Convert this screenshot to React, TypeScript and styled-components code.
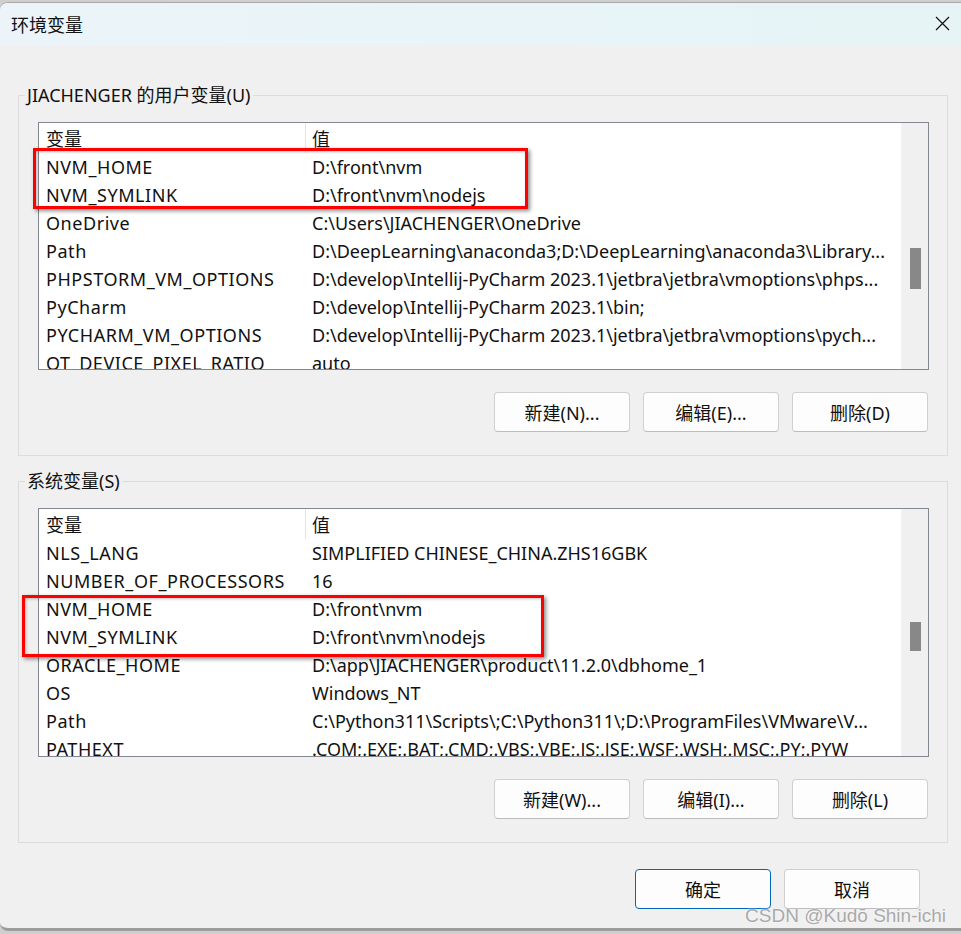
import styled, { createGlobalStyle } from "styled-components";

type EnvVar = { name: string; value: string };

const userVars: EnvVar[] = [
  { name: "NVM_HOME", value: String.raw`D:\front\nvm` },
  { name: "NVM_SYMLINK", value: String.raw`D:\front\nvm\nodejs` },
  { name: "OneDrive", value: String.raw`C:\Users\JIACHENGER\OneDrive` },
  { name: "Path", value: String.raw`D:\DeepLearning\anaconda3;D:\DeepLearning\anaconda3\Library...` },
  { name: "PHPSTORM_VM_OPTIONS", value: String.raw`D:\develop\Intellij-PyCharm 2023.1\jetbra\jetbra\vmoptions\phps...` },
  { name: "PyCharm", value: String.raw`D:\develop\Intellij-PyCharm 2023.1\bin;` },
  { name: "PYCHARM_VM_OPTIONS", value: String.raw`D:\develop\Intellij-PyCharm 2023.1\jetbra\jetbra\vmoptions\pych...` },
  { name: "QT_DEVICE_PIXEL_RATIO", value: "auto" },
];

const systemVars: EnvVar[] = [
  { name: "NLS_LANG", value: "SIMPLIFIED CHINESE_CHINA.ZHS16GBK" },
  { name: "NUMBER_OF_PROCESSORS", value: "16" },
  { name: "NVM_HOME", value: String.raw`D:\front\nvm` },
  { name: "NVM_SYMLINK", value: String.raw`D:\front\nvm\nodejs` },
  { name: "ORACLE_HOME", value: String.raw`D:\app\JIACHENGER\product\11.2.0\dbhome_1` },
  { name: "OS", value: "Windows_NT" },
  { name: "Path", value: String.raw`C:\Python311\Scripts\;C:\Python311\;D:\ProgramFiles\VMware\V...` },
  { name: "PATHEXT", value: ".COM;.EXE;.BAT;.CMD;.VBS;.VBE;.JS;.JSE;.WSF;.WSH;.MSC;.PY;.PYW" },
];

const GlobalStyle = createGlobalStyle`
  html, body {
    margin: 0;
    padding: 0;
    background: #cfcfcf;
    font-family: "Noto Sans", "Noto Sans CJK SC", sans-serif;
    color: #111;
  }
`;

const Dialog = styled.div`
  position: relative;
  margin-top: 2px;
  height: 929px;
  box-sizing: border-box;
  background: #f0f0f0;
  border-top: 1px solid #a8a8a8;
  border-bottom: 3px solid #9c9c9c;
  border-top-left-radius: 8px;
  border-bottom-left-radius: 8px;
  overflow: hidden;
`;

const TitleBar = styled.div`
  height: 43px;
  display: flex;
  align-items: center;
  justify-content: space-between;
  padding: 0 11px 2px 11px;
  box-sizing: border-box;
  background: linear-gradient(90deg, #ecf4f9 0%, #e8f4f8 60%, #e6f4f6 100%);
  font-size: 18px;
`;

const Body = styled.div`
  padding: 37px 13px 0 18px;
`;

const Group = styled.fieldset`
  margin: 0;
  padding: 0;
  border: 1px solid #dcdcdc;
  min-width: 0;
  & + & {
    margin-top: 13px;
  }
`;

const Legend = styled.legend`
  margin-left: 6px;
  padding: 0 2px;
  font-size: 18px;
  line-height: 24px;
`;

const GroupInner = styled.div`
  padding: 15px 18px 23px 19px;
`;

const ListWrap = styled.div<{ $h: number }>`
  position: relative;
  height: ${(p) => p.$h}px;
`;

const ListBox = styled.div`
  height: 100%;
  box-sizing: border-box;
  border: 1px solid #828790;
  background: #fff;
  display: grid;
  grid-template-columns: 1fr 26px;
  overflow: hidden;
`;

const Table = styled.div`
  overflow: hidden;
  border-right: 1px solid #f3f3f3;
`;

const Row = styled.div<{ $head?: boolean }>`
  display: grid;
  grid-template-columns: 267px 1fr;
  height: ${(p) => (p.$head ? 30 : 28)}px;
  align-items: center;
  font-size: 18px;
  white-space: nowrap;
`;

const NameCell = styled.div<{ $head?: boolean }>`
  height: 100%;
  display: flex;
  align-items: center;
  padding-left: 7px;
  box-sizing: border-box;
  letter-spacing: ${(p) => (p.$head ? 0 : 0.55)}px;
  border-right: 1px solid ${(p) => (p.$head ? "#e5e5e5" : "transparent")};
  overflow: hidden;
`;

const ValueCell = styled.div`
  padding-left: 6px;
  overflow: hidden;
`;

const ScrollTrack = styled.div`
  background: #f0f0f0;
  display: flex;
  flex-direction: column;
  align-items: center;
`;

const Thumb = styled.div<{ $top: number; $h: number }>`
  margin-top: ${(p) => p.$top}px;
  width: 11px;
  height: ${(p) => p.$h}px;
  background: #888;
`;

const Highlight = styled.div<{ $l: number; $t: number; $w: number; $h: number }>`
  position: absolute;
  left: ${(p) => p.$l}px;
  top: ${(p) => p.$t}px;
  width: ${(p) => p.$w}px;
  height: ${(p) => p.$h}px;
  box-sizing: border-box;
  border: 3px solid #ff0000;
  box-shadow: 2px 2px 4px rgba(0, 0, 0, 0.45), inset 1px 1px 3px rgba(0, 0, 0, 0.25);
  pointer-events: none;
`;

const ButtonRow = styled.div<{ $pr?: number }>`
  display: flex;
  justify-content: flex-end;
  gap: 13px;
  margin-top: 22px;
  padding-right: ${(p) => p.$pr ?? 1}px;
`;

const Button = styled.button<{ $primary?: boolean }>`
  width: 136px;
  height: 40px;
  box-sizing: border-box;
  border-radius: 4px;
  border: 1px solid ${(p) => (p.$primary ? "#0067c0" : "#d0d0d0")};
  border-bottom-color: ${(p) => (p.$primary ? "#0067c0" : "#bcbcbc")};
  background: #fdfdfd;
  font-family: inherit;
  font-size: 18px;
  color: #111;
  padding: 0;
`;

const Footer = styled(ButtonRow)`
  margin-top: 26px;
`;

const Watermark = styled.div`
  position: absolute;
  right: 15px;
  bottom: 1px;
  font-family: "Liberation Sans", Arial, sans-serif;
  font-size: 19px;
  color: #a9a9a9;
  text-shadow: 0 0 2px #fff;
`;

type ListProps = {
  rows: EnvVar[];
  height: number;
  thumbTop: number;
  thumbH: number;
  box: { l: number; t: number; w: number; h: number };
};

const VarList = ({ rows, height, thumbTop, thumbH, box }: ListProps) => (
  <ListWrap $h={height}>
    <ListBox>
      <Table>
        <Row $head>
          <NameCell $head>变量</NameCell>
          <ValueCell>值</ValueCell>
        </Row>
        {rows.map((r) => (
          <Row key={r.name}>
            <NameCell>{r.name}</NameCell>
            <ValueCell>{r.value}</ValueCell>
          </Row>
        ))}
      </Table>
      <ScrollTrack>
        <Thumb $top={thumbTop} $h={thumbH} />
      </ScrollTrack>
    </ListBox>
    <Highlight $l={box.l} $t={box.t} $w={box.w} $h={box.h} />
  </ListWrap>
);

const CloseIcon = () => (
  <svg width="15" height="15" viewBox="0 0 15 15">
    <path d="M1 1 L14 14 M14 1 L1 14" stroke="#111" strokeWidth="1.2" fill="none" />
  </svg>
);

const App = () => {
  return (
    <>
      <GlobalStyle />
      <Dialog>
        <TitleBar>
          <span>环境变量</span>
          <CloseIcon />
        </TitleBar>
        <Body>
          <Group>
            <Legend>JIACHENGER 的用户变量(U)</Legend>
            <GroupInner>
              <VarList
                rows={userVars}
                height={248}
                thumbTop={125}
                thumbH={41}
                box={{ l: -5, t: 26, w: 495, h: 61 }}
              />
              <ButtonRow>
                <Button>新建(N)...</Button>
                <Button>编辑(E)...</Button>
                <Button>删除(D)</Button>
              </ButtonRow>
            </GroupInner>
          </Group>
          <Group>
            <Legend>系统变量(S)</Legend>
            <GroupInner>
              <VarList
                rows={systemVars}
                height={249}
                thumbTop={113}
                thumbH={29}
                box={{ l: -16, t: 87, w: 522, h: 62 }}
              />
              <ButtonRow>
                <Button>新建(W)...</Button>
                <Button>编辑(I)...</Button>
                <Button>删除(L)</Button>
              </ButtonRow>
            </GroupInner>
          </Group>
          <Footer $pr={28}>
            <Button $primary>确定</Button>
            <Button>取消</Button>
          </Footer>
        </Body>
        <Watermark>CSDN @Kudō Shin-ichi</Watermark>
      </Dialog>
    </>
  );
};

export default App;
